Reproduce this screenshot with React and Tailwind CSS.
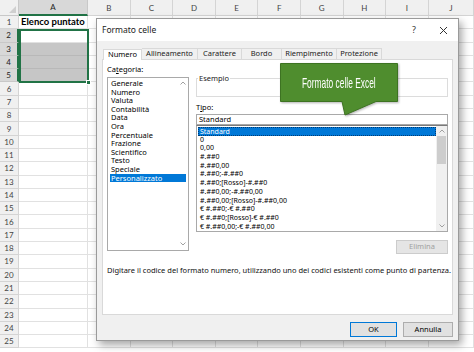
import React from 'react';

const COLS = ['A', 'B', 'C', 'D', 'E', 'F', 'G', 'H', 'I', 'J'];
const ROWS = Array.from({ length: 25 }, (_, i) => i + 1);

const CATEGORIES = [
  'Generale', 'Numero', 'Valuta', 'Contabilità', 'Data', 'Ora', 'Percentuale',
  'Frazione', 'Scientifico', 'Testo', 'Speciale', 'Personalizzato',
];

const FORMATS = [
  'Standard', '0', '0,00', '#.##0', '#.##0,00', '#.##0;-#.##0', '#.##0;[Rosso]-#.##0',
  '#.##0,00;-#.##0,00', '#.##0,00;[Rosso]-#.##0,00', '€ #.##0;-€ #.##0',
  '€ #.##0;[Rosso]-€ #.##0', '€ #.##0,00;-€ #.##0,00',
];

const TABS = [
  ['Numero', 'w-[39px]'],
  ['Allineamento', 'w-[56px]'],
  ['Carattere', 'w-[44px]'],
  ['Bordo', 'w-[40px]'],
  ['Riempimento', 'w-[55px]'],
  ['Protezione', 'w-[45px]'],
];

const Chevron = ({ up }) => (
  <svg width="6" height="4" viewBox="0 0 6 4" className="text-[#a0a0a0]">
    <path d={up ? 'M0.5 3.5 L3 1 L5.5 3.5' : 'M0.5 0.5 L3 3 L5.5 0.5'} fill="none" stroke="currentColor" strokeWidth="1" />
  </svg>
);

const Sheet = () => (
  <div className="grid grid-cols-[19px_69px_repeat(8,42.6px)_1fr] font-['Lato','Liberation_Sans',sans-serif] text-[8px] text-[#444]">
    <div className="h-[16px] bg-[#f0f0f0] border-r border-b border-[#c8c8c8] flex items-end justify-end p-[2px]">
      <div className="w-0 h-0 border-l-[7px] border-l-transparent border-b-[7px] border-b-[#cfcfcf]" />
    </div>
    {COLS.map((c) => (
      <div
        key={c}
        className={
          c === 'A'
            ? 'h-[16px] bg-[#d8d8d8] border-r border-[#c8c8c8] border-b-2 border-b-[#217346] flex items-center justify-center text-[#222]'
            : 'h-[16px] bg-[#f0f0f0] border-r border-b border-[#d4d4d4] flex items-center justify-center'
        }
      >
        {c}
      </div>
    ))}
    {ROWS.map((r) => (
      <React.Fragment key={r}>
        <div
          className={
            r >= 2 && r <= 5
              ? 'h-[13.3px] bg-[#d8d8d8] border-b border-[#c8c8c8] border-r-2 border-r-[#217346] flex items-center justify-center text-[#222]'
              : 'h-[13.3px] bg-[#f0f0f0] border-b border-r border-[#d4d4d4] flex items-center justify-center'
          }
        >
          {r}
        </div>
        {COLS.map((c) => (
          <div
            key={c}
            className={
              c === 'A' && r >= 3 && r <= 5
                ? 'h-[13.3px] bg-[#c6c6c6] border-r border-b border-[#b8b8b8]'
                : 'h-[13.3px] bg-white border-r border-b border-[#e1e1e1] flex items-center'
            }
          >
            {c === 'A' && r === 1 && (
              <span className="pl-[2px] font-bold text-[9.5px] text-black whitespace-nowrap">Elenco puntato</span>
            )}
          </div>
        ))}
      </React.Fragment>
    ))}
  </div>
);

const Dialog = () => (
  <div className="absolute left-[96px] top-[18px] w-[363px] h-[323px] border border-[#9a9a9a] bg-[#f0f0f0] shadow-[3px_4px_8px_rgba(0,0,0,0.35)] flex flex-col font-['Noto_Sans','Open_Sans',sans-serif] text-[7.5px] text-black">
    <div className="h-[22px] bg-white flex items-center pl-[5px] pr-[10px]">
      <span className="text-[8.5px] text-[#222]">Formato celle</span>
      <span className="ml-auto text-[9px] text-[#333]">?</span>
      <svg width="9" height="9" viewBox="0 0 9 9" className="ml-[23px]">
        <path d="M1 1 L8 8 M8 1 L1 8" stroke="#333" strokeWidth="1" />
      </svg>
    </div>

    <div className="flex-1 flex flex-col px-[5px] pt-[7px]">
      <div className="flex h-[11px] pl-[1px]">
        {TABS.map(([t, w], i) => (
          <div
            key={t}
            className={
              i === 0
                ? `${w} bg-white border border-b-0 border-[#d9d9d9] flex items-center justify-center relative top-[1px] h-[11px]`
                : `${w} border-t border-r border-[#d9d9d9] flex items-center justify-center text-[#222]`
            }
          >
            {t}
          </div>
        ))}
      </div>

      <div className="h-[256px] bg-white border border-[#d9d9d9] flex flex-col px-[4px] pt-[5px]">
        <div className="flex">
          <div className="w-[82px] flex flex-col">
            <div className="h-[12px] leading-[9px]">
              Ca<span className="underline">t</span>egoria:
            </div>
            <div className="h-[174px] border border-[#a9a9a9] relative pt-[1px] pl-[2px] pr-[1px]">
              <div className="absolute right-[2px] top-[3px]"><Chevron up /></div>
              <div className="absolute right-[2px] bottom-[4px]"><Chevron /></div>
              {CATEGORIES.map((c) => (
                <div
                  key={c}
                  className={
                    c === 'Personalizzato'
                      ? 'h-[8.6px] leading-[8.6px] bg-[#0078d7] text-white pl-[1px] mr-[1px] whitespace-nowrap'
                      : 'h-[8.6px] leading-[8.6px] pl-[1px] whitespace-nowrap'
                  }
                >
                  {c}
                </div>
              ))}
            </div>
          </div>

          <div className="ml-[7px] w-[252px] flex flex-col">
            <fieldset className="mt-[9px] h-[23px] border border-[#dcdcdc] px-[1px]">
              <legend className="px-[1px] leading-[8px] text-[#222]">Esempio</legend>
            </fieldset>
            <div className="mt-[5px] h-[11px] leading-[11px]">
              T<span className="underline">i</span>po:
            </div>
            <div className="mt-[1px] h-[11px] border border-[#a9a9a9] leading-[9px] pl-[2px]">Standard</div>
            <div className="h-[107px] border border-[#a9a9a9] border-t-[#7a7a7a] flex overflow-hidden">
              <div className="flex-1 pt-[1px] pl-[1px] text-[7px] overflow-hidden">
                {FORMATS.map((f, i) => (
                  <div
                    key={i}
                    className={
                      i === 0
                        ? 'h-[8.7px] leading-[8.7px] bg-[#0078d7] text-white border border-dotted border-[#003c74] pl-[1px] whitespace-nowrap'
                        : 'h-[8.7px] leading-[8.7px] pl-[2px] whitespace-nowrap'
                    }
                  >
                    {f}
                  </div>
                ))}
              </div>
              <div className="w-[11px] bg-[#f0f0f0] flex flex-col items-center">
                <div className="h-[10px] flex items-center"><Chevron up /></div>
                <div className="w-[9px] h-[28px] bg-[#cdcdcd]" />
                <div className="mt-auto h-[10px] flex items-center"><Chevron /></div>
              </div>
            </div>
            <div className="mt-[8px] flex justify-end">
              <div className="w-[52px] h-[14px] bg-[#e5e5e5] border border-[#cccccc] flex items-center justify-center text-[#a0a0a0]">
                Elimina
              </div>
            </div>
          </div>
        </div>
        <div className="mt-[11px] whitespace-nowrap text-[#111]">
          Digitare il codice del formato numero, utilizzando uno dei codici esistenti come punto di partenza.
        </div>
      </div>

      <div className="flex justify-end gap-[6px] mt-[7px]">
        <div className="w-[47px] h-[15px] bg-[#e1e1e1] border border-[#0078d7] flex items-center justify-center">OK</div>
        <div className="w-[50px] h-[15px] bg-[#e1e1e1] border border-[#adadad] flex items-center justify-center">Annulla</div>
      </div>
    </div>
  </div>
);

const Callout = () => (
  <div className="absolute left-[280px] top-[63px] w-[118px] h-[53px]">
    <svg width="118" height="53" viewBox="0 0 118 53" className="absolute inset-0 drop-shadow-[1px_1px_1px_rgba(0,0,0,0.3)]">
      <path d="M0.5 0.5 H117.5 V38.5 H96 L65 52 L62 38.5 H0.5 Z" fill="#4f8d2e" stroke="#3d7322" strokeWidth="1" />
    </svg>
    <div className="relative h-[40px] flex items-center justify-center">
      <span className="inline-block text-white text-[15px] font-['Liberation_Sans',sans-serif] scale-x-[0.56] whitespace-nowrap">
        Formato celle Excel
      </span>
    </div>
  </div>
);

export default function App() {
  return (
    <div className="relative w-[474px] h-[352px] overflow-hidden bg-white">
      <Sheet />
      <div className="absolute left-[19px] top-[29px] w-[70px] h-[54px] border-2 border-[#217346] pointer-events-none">
        <div className="absolute right-[-4px] bottom-[-4px] w-[5px] h-[5px] bg-[#217346] border border-white" />
      </div>
      <Dialog />
      <Callout />
    </div>
  );
}
